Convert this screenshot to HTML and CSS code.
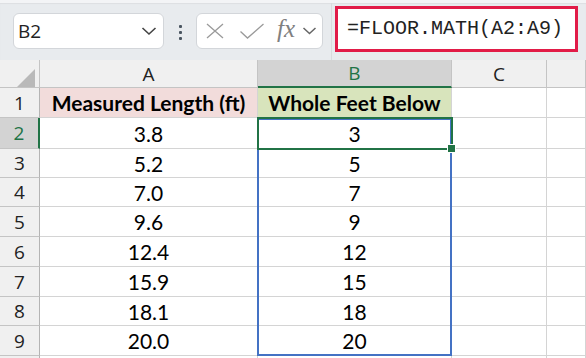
FILE: index.html
```html
<!DOCTYPE html>
<html lang="en">
<head>
    <meta charset="UTF-8">
    <meta name="viewport" content="width=device-width, initial-scale=1.0">
    <title>FLOOR.MATH</title>
    <link rel="stylesheet" href="styles.css">
</head>
<body>
    <header class="toolbar">
        <div class="name-box">
            <span>B2</span>
            <svg class="chevron" width="16" height="10" viewBox="0 0 16 10"><path d="M1.5 2 L8 8 L14.5 2" fill="none" stroke="#444" stroke-width="1.6"/></svg>
        </div>
        <div class="dots"><i></i><i></i><i></i></div>
        <div class="fx-box">
            <svg class="icon-x" width="20" height="16" viewBox="0 0 20 16"><path d="M2 1 L18 15 M18 1 L2 15" fill="none" stroke="#9a9a9a" stroke-width="1.3"/></svg>
            <svg class="icon-check" width="26" height="16" viewBox="0 0 26 16"><path d="M1.5 8.5 L8.5 15 L24.5 1" fill="none" stroke="#9a9a9a" stroke-width="1.3"/></svg>
            <span class="fx">fx</span>
            <svg class="chevron small" width="15" height="10" viewBox="0 0 15 10"><path d="M1.5 2 L7.5 7.5 L13.5 2" fill="none" stroke="#666" stroke-width="1.5"/></svg>
        </div>
        <div class="divider"></div>
        <div class="formula">=FLOOR.MATH(A2:A9)</div>
    </header>

    <main class="sheet">
        <div class="corner"><span class="triangle"></span></div>
        <div class="col-head">A</div>
        <div class="col-head active">B</div>
        <div class="col-head">C</div>
        <div class="col-head"></div>

        <div class="row-head">1</div>
        <div class="cell title-a">Measured Length (ft)</div>
        <div class="cell title-b">Whole Feet Below</div>
        <div class="cell"></div>
        <div class="cell"></div>

        <div class="row-head active">2</div>
        <div class="cell">3.8</div>
        <div class="cell">3</div>
        <div class="cell"></div>
        <div class="cell"></div>

        <div class="row-head">3</div>
        <div class="cell">5.2</div>
        <div class="cell">5</div>
        <div class="cell"></div>
        <div class="cell"></div>

        <div class="row-head">4</div>
        <div class="cell">7.0</div>
        <div class="cell">7</div>
        <div class="cell"></div>
        <div class="cell"></div>

        <div class="row-head">5</div>
        <div class="cell">9.6</div>
        <div class="cell">9</div>
        <div class="cell"></div>
        <div class="cell"></div>

        <div class="row-head">6</div>
        <div class="cell">12.4</div>
        <div class="cell">12</div>
        <div class="cell"></div>
        <div class="cell"></div>

        <div class="row-head">7</div>
        <div class="cell">15.9</div>
        <div class="cell">15</div>
        <div class="cell"></div>
        <div class="cell"></div>

        <div class="row-head">8</div>
        <div class="cell">18.1</div>
        <div class="cell">18</div>
        <div class="cell"></div>
        <div class="cell"></div>

        <div class="row-head">9</div>
        <div class="cell">20.0</div>
        <div class="cell">20</div>
        <div class="cell"></div>
        <div class="cell"></div>

        <div class="row-head"></div>
        <div class="cell"></div>
        <div class="cell"></div>
        <div class="cell"></div>
        <div class="cell"></div>

        <!-- contorno do intervalo e célula selecionada -->
        <div class="range"></div>
        <div class="selection"><span class="handle"></span></div>
    </main>
</body>
</html>
```

FILE: styles.css
```css
body {
    margin: 0;
    padding: 0;
    width: 586px;
    height: 358px;
    overflow: hidden;
    background-color: #fff;
    font-family: "Open Sans", sans-serif;
}

.toolbar {
    display: flex;
    align-items: flex-start;
    height: 60px;
    box-sizing: border-box;
    padding-left: 13px;
    background-color: #e8ebee;
    border-top: 3px solid #f3f4f6;
    box-shadow: inset 0 1px 1px rgba(0, 0, 0, 0.05);
}

.name-box {
    display: flex;
    align-items: center;
    justify-content: space-between;
    width: 151px;
    height: 36px;
    box-sizing: border-box;
    margin-top: 10px;
    padding: 0 6px 0 4px;
    background-color: #fff;
    border: 1px solid #d3d6da;
    border-radius: 6px;
    font-size: 19px;
    color: #222;
}

.dots {
    display: flex;
    flex-direction: column;
    gap: 3px;
    margin: 22px 0 0 15px;
}

.dots i {
    display: block;
    width: 3px;
    height: 3px;
    background-color: #4a5560;
    border-radius: 1px;
}

.fx-box {
    display: flex;
    align-items: center;
    width: 127px;
    height: 36px;
    box-sizing: border-box;
    margin: 10px 0 0 14px;
    padding-left: 8px;
    background-color: #fff;
    border: 1px solid #d3d6da;
    border-radius: 6px;
}

.icon-x {
    margin-right: 14px;
}

.icon-check {
    margin-right: 12px;
}

.fx {
    font-family: "Liberation Serif", serif;
    font-style: italic;
    font-size: 25px;
    color: #808080;
    margin-top: -4px;
    margin-right: 7px;
}

.divider {
    width: 1px;
    height: 57px;
    margin-left: 8px;
    background-color: #d8dbde;
}

.formula {
    width: 243px;
    height: 46px;
    box-sizing: border-box;
    margin: 3px 0 0 3px;
    padding: 8px 0 0 9px;
    background-color: #fff;
    border: 3px solid #e11b48;
    font-family: "Liberation Mono", monospace;
    font-size: 20px;
    color: #222;
    line-height: 24px;
}

.sheet {
    position: relative;
    display: grid;
    grid-template-columns: 40px 218px 194px 95px 39px;
    grid-template-rows: 28px 30px 31px 29px 29px 30px 30px 30px 29px 30px 10px;
}

.corner,
.col-head,
.row-head {
    background-color: #f0f0f0;
    color: #222;
    font-size: 19px;
    border-right: 1px solid #c4c4c4;
    border-bottom: 1px solid #c4c4c4;
    display: flex;
    align-items: center;
    justify-content: center;
    box-sizing: border-box;
}

.corner {
    position: relative;
}

.triangle {
    position: absolute;
    right: 4px;
    bottom: 0;
    width: 0;
    height: 0;
    border-left: 18px solid transparent;
    border-bottom: 18px solid #b9b9b9;
}

.row-head {
    border-right-color: #b4b4b4;
    border-bottom-color: #c4c4c4;
}

.col-head.active {
    background-color: #d3d3d3;
    color: #217346;
    border-bottom: 2px solid #217346;
}

.row-head.active {
    background-color: #d3d3d3;
    color: #217346;
    border-right: 2px solid #217346;
}

.cell {
    display: flex;
    align-items: center;
    justify-content: center;
    box-sizing: border-box;
    border-right: 1px solid #d4d4d4;
    border-bottom: 1px solid #d4d4d4;
    font-family: Lato, sans-serif;
    font-size: 21px;
    color: #000;
}

.title-a {
    background-color: #f2dcdb;
    font-weight: bold;
}

.title-b {
    background-color: #d8e4bc;
    font-weight: bold;
}

.range {
    position: absolute;
    left: 257px;
    top: 58px;
    width: 195px;
    height: 238px;
    box-sizing: border-box;
    border: 2px solid #4472c4;
}

.selection {
    position: absolute;
    left: 257px;
    top: 57px;
    width: 196px;
    height: 33px;
    box-sizing: border-box;
    border: 2px solid #217346;
}

.handle {
    position: absolute;
    right: -5px;
    bottom: -5px;
    width: 7px;
    height: 7px;
    background-color: #217346;
    border: 1px solid #fff;
}
```
